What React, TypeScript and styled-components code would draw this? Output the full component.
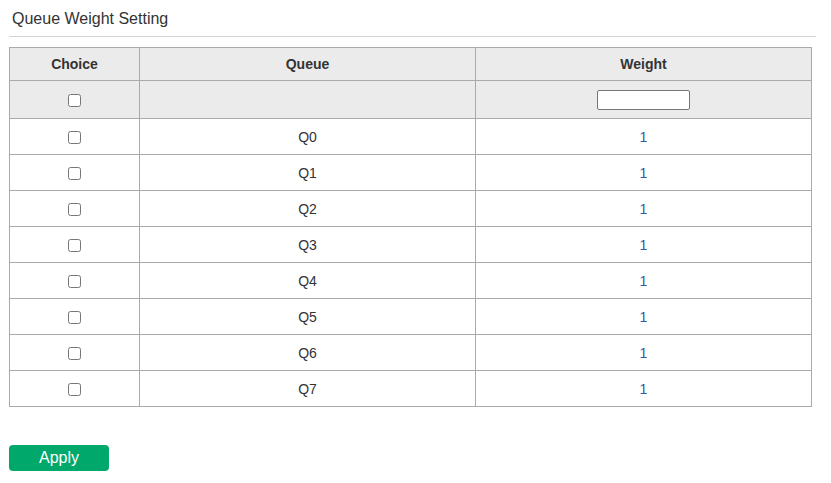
import React, { useState } from 'react';
import styled, { createGlobalStyle } from 'styled-components';

const GlobalStyle = createGlobalStyle`
  body {
    margin: 0;
    font-family: "Liberation Sans", Arial, sans-serif;
    color: #333;
    background: #fff;
  }
`;

const QUEUES = ['Q0', 'Q1', 'Q2', 'Q3', 'Q4', 'Q5', 'Q6', 'Q7'];

const S = {
  Page: styled.div`
    padding: 9px 15px 0 9px;
  `,
  Title: styled.div`
    font-size: 16px;
    line-height: 20px;
    padding: 0 0 7px 3px;
    border-bottom: 1px solid #d2d2d2;
  `,
  Table: styled.table`
    margin-top: 10px;
    width: 803px;
    border-collapse: collapse;
    font-size: 14px;
  `,
  HeadCell: styled.th<{ width?: number }>`
    background: #ebebeb;
    border: 1px solid #aaa;
    height: 32px;
    padding: 0;
    font-weight: bold;
    text-align: center;
    color: #333;
    ${({ width }) => (width ? `width: ${width}px;` : '')}
  `,
  FilterCell: styled.td`
    background: #ebebeb;
    border: 1px solid #aaa;
    height: 37px;
    padding: 0;
    text-align: center;
  `,
  Cell: styled.td<{ blue?: boolean }>`
    border: 1px solid #aaa;
    height: 35px;
    padding: 0;
    text-align: center;
    color: ${({ blue }) => (blue ? '#2b5aa6' : '#333')};
  `,
  Check: styled.input`
    width: 13px;
    height: 13px;
    margin: 0;
    vertical-align: middle;
  `,
  WeightInput: styled.input`
    box-sizing: border-box;
    width: 93px;
    height: 20px;
    border: 1px solid #767676;
    border-radius: 2px;
    padding: 1px 2px;
    vertical-align: middle;
  `,
  Footer: styled.div`
    margin-top: 38px;
  `,
  ApplyButton: styled.button`
    width: 100px;
    height: 26px;
    border: none;
    border-radius: 4px;
    background: #00a86b;
    color: #fff;
    font-family: "Liberation Sans", Arial, sans-serif;
    font-size: 16px;
    padding: 0;
    cursor: pointer;
  `,
};

const App = () => {
  const [checked, setChecked] = useState<boolean[]>(QUEUES.map(() => false));
  const [weight, setWeight] = useState('');

  const allChecked = checked.every(Boolean);

  return (
    <S.Page>
      <GlobalStyle />
      <S.Title>Queue Weight Setting</S.Title>
      <S.Table>
        <thead>
          <tr>
            <S.HeadCell width={129}>Choice</S.HeadCell>
            <S.HeadCell width={335}>Queue</S.HeadCell>
            <S.HeadCell>Weight</S.HeadCell>
          </tr>
        </thead>
        <tbody>
          <tr>
            <S.FilterCell>
              <S.Check
                type="checkbox"
                checked={allChecked}
                onChange={() => setChecked(QUEUES.map(() => !allChecked))}
              />
            </S.FilterCell>
            <S.FilterCell />
            <S.FilterCell>
              <S.WeightInput value={weight} onChange={(e) => setWeight(e.target.value)} />
            </S.FilterCell>
          </tr>
          {QUEUES.map((q, index) => (
            <tr key={q}>
              <S.Cell>
                <S.Check
                  type="checkbox"
                  checked={checked[index]}
                  onChange={() => setChecked(checked.map((c, i) => (i === index ? !c : c)))}
                />
              </S.Cell>
              <S.Cell>{q}</S.Cell>
              <S.Cell blue>1</S.Cell>
            </tr>
          ))}
        </tbody>
      </S.Table>
      <S.Footer>
        <S.ApplyButton>Apply</S.ApplyButton>
      </S.Footer>
    </S.Page>
  );
};

export default App;
